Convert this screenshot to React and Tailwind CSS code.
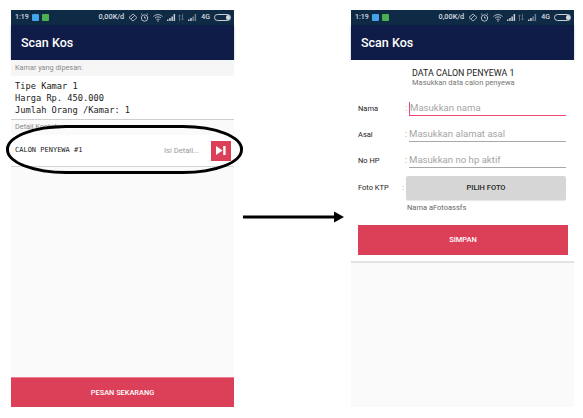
const StatusBar = () => (
  <div className="h-[15px] bg-[#0f2a44] flex items-center pl-[4px] pr-[3px] text-[7px] font-medium text-[#d5dbe2] font-['Roboto',sans-serif]">
    <span>1:19</span>
    <span className="w-[7px] h-[7px] ml-[3px] bg-[#42a5e8] rounded-[1px]" />
    <span className="w-[7px] h-[7px] ml-[3px] bg-[#4cb050] rounded-[1px]" />
    <span className="ml-auto text-[7.3px]">0,00K/d</span>
    <svg width="10" height="9" viewBox="0 0 10 9" fill="none" stroke="#c8ced6" strokeWidth="0.8" className="ml-[4px]">
      <path d="M5 1 L9 4.5 L5 8 L1 4.5 Z M3 6 L7 2" />
    </svg>
    <svg width="9" height="9" viewBox="0 0 9 9" fill="none" stroke="#c8ced6" strokeWidth="0.9" className="ml-[2px]">
      <circle cx="4.5" cy="5" r="3.2" />
      <path d="M4.5 3.4 V5 H6 M1 1.5 L2.2 0.6 M8 1.5 L6.8 0.6" />
    </svg>
    <svg width="10" height="8" viewBox="0 0 10 8" fill="none" stroke="#c8ced6" strokeWidth="0.9" className="ml-[4px]">
      <path d="M0.5 2.5 C3 0 7 0 9.5 2.5 M2 4 C4 2.5 6 2.5 8 4 M3.5 5.6 C4.5 5 5.5 5 6.5 5.6" />
      <circle cx="5" cy="7" r="0.7" fill="#c8ced6" stroke="none" />
    </svg>
    <svg width="9" height="7" viewBox="0 0 9 7" fill="#c8ced6" className="ml-[4px]">
      <path d="M0 7 V5.5 H1.5 V7 Z M2.2 7 V4 H3.7 V7 Z M4.4 7 V2.5 H5.9 V7 Z M6.6 7 V0 H8.1 V7 Z" />
    </svg>
    <svg width="6" height="7" viewBox="0 0 6 7" fill="none" stroke="#6f7f8f" strokeWidth="0.8" className="ml-[2px]">
      <path d="M1.5 7 V1 M0.3 2.2 L1.5 1 L2.7 2.2 M4.5 0 V6 M3.3 4.8 L4.5 6 L5.7 4.8" />
    </svg>
    <svg width="9" height="7" viewBox="0 0 9 7" fill="#6f7f8f" className="ml-[4px]">
      <path d="M0 7 V5.5 H1.5 V7 Z" fill="#c8ced6" />
      <path d="M2.2 7 V4 H3.7 V7 Z" fill="#c8ced6" />
      <path d="M4.4 7 V2.5 H5.9 V7 Z M6.6 7 V0 H8.1 V7 Z" />
    </svg>
    <span className="ml-[4px]">4G</span>
    <span className="ml-[4px] w-[17px] h-[7px] rounded-full border border-[#c8ced6] flex justify-end">
      <span className="w-[4px] h-full rounded-full bg-[#d5dbe2]" />
    </span>
  </div>
);

const Toolbar = () => (
  <div className="h-[35px] bg-[#0f1c47] flex items-center pl-[10px] pt-[1px] text-white text-[12.5px] font-medium shadow-[0_1px_2px_rgba(0,0,0,0.3)]">
    Scan Kos
  </div>
);

const FormRow = ({ label, placeholder, active }) => (
  <div className="flex items-end h-[26px] pl-[7px] pr-[8px]">
    <span className="w-[47px] h-[15px] leading-[15px] text-[7.5px] text-[#222]">{label}</span>
    <span className="w-[4px] h-[15px] leading-[15px] text-[9px] text-[#999]">:</span>
    <div
      className={`flex-1 h-[15px] flex items-center border-b ${
        active ? "border-[#e84a74]" : "border-[#a8a8a8]"
      }`}
    >
      {active && <span className="w-px h-[13px] bg-[#e84a74]" />}
      <span className="text-[9.6px] text-[#a5a5a5]">{placeholder}</span>
    </div>
  </div>
);

const App = () => {
  return (
    <div className="w-[583px] h-[418px] bg-white flex items-start pt-[10px] pl-[11px] font-['Roboto',sans-serif] overflow-hidden">
      {/* screen 1 */}
      <div className="relative w-[223px] h-[397px] bg-[#fafafa] flex flex-col">
        <StatusBar />
        <Toolbar />
        <div className="h-[16px] bg-[#f6f6f6] flex items-center pl-[4px] text-[7.3px] text-[#8a8a8a]">
          Kamar yang dipesan:
        </div>
        <div className="h-[44px] bg-white border-b border-[#cfcfcf] pl-[4px] pt-[4px] font-['DejaVu_Sans_Mono',monospace] text-[8.7px] leading-[12px] text-[#222]">
          <div>Tipe Kamar 1</div>
          <div>Harga Rp. 450.000</div>
          <div>Jumlah Orang /Kamar: 1</div>
        </div>
        <div className="h-[15px] flex items-center pl-[4px] text-[7.3px] text-[#8a8a8a]">
          Detail Kontak:
        </div>
        <div className="h-[32px] bg-white border-b border-[#d5d5d5] flex items-center pl-[4px] pr-[3px]">
          <span className="font-['DejaVu_Sans_Mono',monospace] text-[7px] text-[#222]">CALON PENYEWA #1</span>
          <span className="ml-auto text-[7.6px] text-[#999]">Isi Detail...</span>
          <span className="ml-[12px] w-[20px] h-[20px] bg-[#dc4058] flex items-center justify-center">
            <svg width="10" height="9" viewBox="0 0 10 9" fill="#fff">
              <path d="M0 0 L6.5 4.5 L0 9 Z" />
              <rect x="7.2" y="0" width="2.4" height="9" />
            </svg>
          </span>
        </div>
        <button className="mt-auto h-[30px] bg-[#dc4058] border-t border-[#ec8090] text-white text-[7.4px] font-medium">
          PESAN SEKARANG
        </button>

        {/* hand drawn ellipse over the row */}
        <div className="absolute left-[-5px] top-[115px] w-[237px] h-[49px] rounded-[60px/24px] border-[3px] border-black" />
      </div>

      {/* arrow between the screens */}
      <svg width="117" height="14" viewBox="0 0 117 14" className="mt-[200px] shrink-0">
        <path d="M9 7 H 101" stroke="#000" strokeWidth="3" />
        <path d="M100 1.5 L110 7 L100 12.5 Z" fill="#000" />
      </svg>

      {/* screen 2 */}
      <div className="w-[223px] h-[397px] bg-[#fafafa] flex flex-col">
        <StatusBar />
        <Toolbar />
        <div className="bg-white border-b-2 border-[#e2e2e2] h-[203px] flex flex-col">
          <div className="pl-[61px] pt-[8px] h-[30px]">
            <div className="text-[8.9px] leading-[10px] text-[#222]">DATA CALON PENYEWA 1</div>
            <div className="text-[7.5px] leading-[10px] text-[#777]">Masukkan data calon penyewa</div>
          </div>
          <FormRow label="Nama" placeholder="Masukkan nama" active />
          <FormRow label="Asal" placeholder="Masukkan alamat asal" />
          <FormRow label="No HP" placeholder="Masukkan no hp aktif" />
          <div className="flex items-center h-[24px] mt-[8px] pl-[7px] pr-[8px]">
            <span className="w-[44px] text-[7.5px] text-[#222]">Foto KTP</span>
            <span className="w-[4px] text-[8px] text-[#999]">:</span>
            <button className="flex-1 h-[24px] bg-[#d5d6d5] rounded-[2px] shadow-[0_1px_1px_rgba(0,0,0,0.1)] text-[7.5px] font-medium text-[#222]">
              PILIH FOTO
            </button>
          </div>
          <div className="pl-[56px] mt-[3px] text-[7.5px] leading-[10px] text-[#666]">Nama aFotoassfs</div>
          <button className="mt-[12px] ml-[7px] w-[210px] h-[30px] bg-[#dc4058] text-white text-[7.5px] font-medium">
            SIMPAN
          </button>
        </div>
      </div>
    </div>
  );
};

export default App;
